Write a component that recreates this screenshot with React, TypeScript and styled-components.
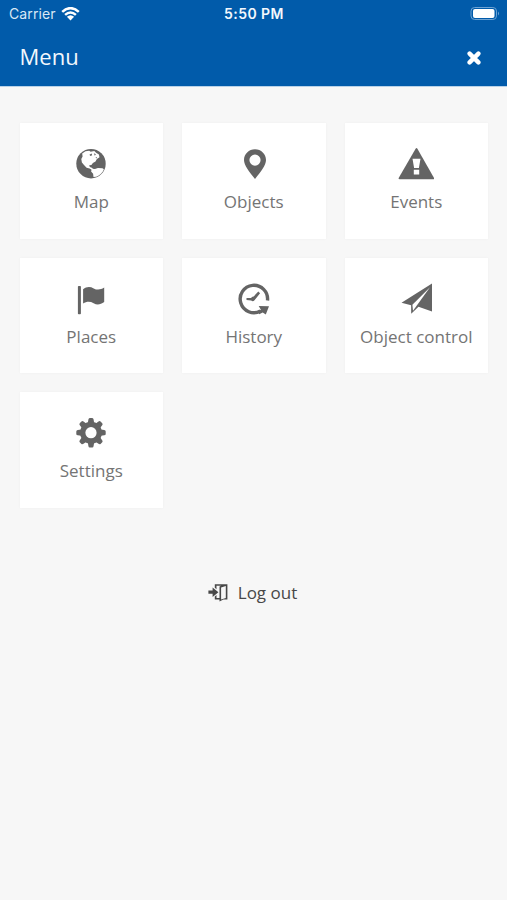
import React from 'react';
import styled, { createGlobalStyle } from 'styled-components';

const GlobalStyle = createGlobalStyle`
  * { box-sizing: border-box; }
  body { margin: 0; background: #f7f7f7; font-family: "Open Sans", sans-serif; }
`;

const Screen = styled.div`
  width: 100%;
  min-height: 900px;
  background: #f7f7f7;
  overflow: hidden;
`;

const Header = styled.header`
  height: 86px;
  background: #015baa;
  color: #f3f8fd;
  box-shadow: 0 1px 0 #b9d2e8;
`;

const StatusBar = styled.div`
  height: 28px;
  padding: 0 7px 0 9px;
  display: grid;
  grid-template-columns: 1fr auto 1fr;
  align-items: center;
  font-family: Inter, sans-serif;
  font-size: 14px;
  line-height: 28px;
`;

const Carrier = styled.div`
  display: flex;
  align-items: center;
  gap: 5px;
  color: #d9e8f5;
  letter-spacing: 0.12px;
`;

const Clock = styled.div`
  margin-right: 1px;
  font-size: 14px;
  font-weight: 600;
  letter-spacing: 0.45px;
`;

const Battery = styled.svg`
  justify-self: end;
  display: block;
`;

const TitleBar = styled.div`
  height: 58px;
  padding: 0 26px 0 19.5px;
  display: flex;
  align-items: center;
  justify-content: space-between;
`;

const Title = styled.h1`
  margin: 0;
  font-size: 22px;
  font-weight: 400;
  line-height: 56px;
  height: 58px;
`;

const CloseButton = styled.button`
  border: 0;
  padding: 2px 0 0;
  background: none;
  display: flex;
`;

const Grid = styled.nav`
  padding: 37px 18.5px 0 19.5px;
  display: grid;
  grid-template-columns: repeat(3, 143.5px);
  grid-auto-rows: 115.5px;
  gap: 19px;
`;

const Card = styled.a`
  background: #fff;
  box-shadow: 0 0 3px rgba(0, 0, 0, 0.035);
  color: #747474;
  display: flex;
  flex-direction: column;
  align-items: center;
  padding-top: 25px;
`;

const CardIcon = styled.svg`
  width: 36px;
  height: 32px;
  display: block;
  fill: #646464;
`;

const CardLabel = styled.span`
  margin-top: 10px;
  font-size: 17px;
  line-height: 24px;
  white-space: nowrap;
`;

const Logout = styled.button`
  margin: 73px auto 0;
  padding: 0;
  border: 0;
  background: none;
  display: flex;
  align-items: center;
  gap: 10px;
  color: #484848;
  font: 400 17px/24px "Open Sans", sans-serif;
`;

const LogoutIcon = styled.svg`
  margin-left: -2px;
`;

const gearTeeth = [0, 45, 90, 135, 180, 225, 270, 315];

const items = [
  {
    label: 'Map',
    icon: (
      <>
        <circle cx="18" cy="15.7" r="14.7" />
        <path
          fill="#fff"
          d="M9.200 5.500l3.300-2.300 3.700-.4 1.500.9 3.600-.8 1.800 1.800 2.800 1.800.6 2.700-2.600 1.700-1.400 2.600-2.600 1.400-1.500 2-2.200.4.6 1.700 2 .8 1.200 1.300-.9.900-2.500-1.600-3-.7-2.600-2.700-2.100-2.600-.6-3.500 1.300-2.300z"
        />
        <path
          fill="#fff"
          d="M18.800 20.700l3.200.4 2.900-1.200 4.600.3 1.400 1c-1.300 3.500-4 6.200-7.700 7.600l-2.700.2-.4-3.200-2-2.400z"
        />
        <path d="M16.400 6.800l2.300-1.200.4 1.700-1.600.8zM20.900 5.300l2 .9-1.100 1.500zM22.500 9.600l1.500-.5-.5 1.500z" />
      </>
    ),
  },
  {
    label: 'Objects',
    icon: (
      <path
        fillRule="evenodd"
        d="M19 1.300c6.100 0 11 4.800 11 10.800 0 5.200-5.200 11.900-11 19-5.800-7.100-11-13.800-11-19C8 6.100 12.900 1.300 19 1.300zM19 6.500a5.600 5.600 0 1 0 0 11.200a5.600 5.600 0 1 0 0-11.200z"
      />
    ),
  },
  {
    label: 'Events',
    icon: (
      <g transform="translate(.5 0)">
        <path d="M17.100.7q.9-1.400 1.800 0L35.400 29.700q.7 1.500-.8 1.500H1.100q-1.500 0-.8-1.500z" />
        <path fill="#fff" d="M14 10.800h8l-1.600 9.200h-4.800zM15.300 21.800h5.400v4.600h-5.400z" />
      </g>
    ),
  },
  {
    label: 'Places',
    icon: (
      <>
        <rect x="4.900" y="2.900" width="3" height="28.300" rx=".8" />
        <path d="M10.100 6.200c3.500-2.800 7.200-2.800 10.600-.8 3.400 1.800 6.700 1.600 10.500-.8v14.300c-3.600 2.700-7 3.400-10.600 1.300-3.300-1.900-6.900-2-10.500.2z" />
      </>
    ),
  },
  {
    label: 'History',
    icon: (
      <>
        <path fill="none" stroke="#646464" strokeWidth="3.400" d="M24.500 28A13.700 13.700 0 1 1 31.500 17.500" />
        <path d="M22.700 22.900l10.300.3-3.200 8.200-3.100-2-3.500 1.900-1.100-3 2.800-1.500z" />
        <path d="M22.300 8.600l1.800 1.700-5.600 7q-1.600 1.600-3.300.2l-4.700-.5v-2.100h4.600q.7-1.700 2.600-1.500z" />
      </>
    ),
  },
  {
    label: 'Object control',
    icon: (
      <>
        <path d="M34 .6L3.500 19.800l9.600 2.500.1 8.400 7.300-6.900 13.500 4.700z" />
        <path fill="#fff" d="M32 4.300L14.400 21.700l.6 6.100 4-5.500z" />
      </>
    ),
  },
  {
    label: 'Settings',
    icon: (
      <>
        {gearTeeth.map((angle) => (
          <path
            key={angle}
            transform={`rotate(${angle} 18 15.700)`}
            d="M14.600 7.500l.8-5q.2-1.500 1.400-1.500h2.400q1.200 0 1.400 1.500l.8 5z"
          />
        ))}
        <circle cx="18" cy="15.700" r="10.900" />
        <circle cx="18" cy="15.700" r="5.600" fill="#fff" />
      </>
    ),
  },
];

export default function App() {
  return (
    <>
      <GlobalStyle />
      <Screen>
        <Header>
          <StatusBar>
            <Carrier>
              Carrier
              <svg width="19" height="14" viewBox="0 0 19 14" fill="none" stroke="#fff" strokeWidth="2.500">
                <path d="M1.200 4.900Q9.500-2.600 17.800 4.900M4.100 7.900Q9.500 3 14.900 7.900" />
                <path fill="#fff" stroke="none" d="M5.900 9.800Q9.500 6.800 13.100 9.800L9.500 13.400z" />
              </svg>
            </Carrier>
            <Clock>5:50 PM</Clock>
            <Battery width="30" height="14" viewBox="0 0 30 14">
              <rect x="1" y=".5" width="25.500" height="12" rx="3.600" fill="none" stroke="#6ea3d3" />
              <rect x="3" y="2.100" width="21.500" height="8.800" rx="2" fill="#fff" />
              <path d="M28 4.500q2 2 0 4z" fill="#6ea3d3" />
            </Battery>
          </StatusBar>
          <TitleBar>
            <Title>Menu</Title>
            <CloseButton aria-label="Close">
              <svg width="14" height="14" viewBox="0 0 14 14" stroke="#fff" strokeWidth="4.400" strokeLinecap="round">
                <path d="M2.600 2.600l8.800 8.800M11.400 2.600l-8.800 8.800" />
              </svg>
            </CloseButton>
          </TitleBar>
        </Header>
        <Grid>
          {items.map(({ label, icon }) => (
            <Card key={label}>
              <CardIcon viewBox="0 0 36 32">{icon}</CardIcon>
              <CardLabel>{label}</CardLabel>
            </Card>
          ))}
        </Grid>
        <Logout>
          <LogoutIcon width="20" height="20" viewBox="0 0 20 20" fill="#484848">
            <path d="M.4 7.600h4.200V4.400l5.800 4.800-5.800 4.800v-3.200H.4z" />
            <path d="M6.800 4.800V1.200h12.600v15.300h-4l-3.900 1.900V16.500H6.800v-3l1.700-1.400v2.800h3V3.400l1.500-.6H8.500v3.400z" />
            <path fill="#f7f7f7" d="M13.100 4.500l4.700-1.600v12l-4.700 1.600z" />
          </LogoutIcon>
          Log out
        </Logout>
      </Screen>
    </>
  );
}
